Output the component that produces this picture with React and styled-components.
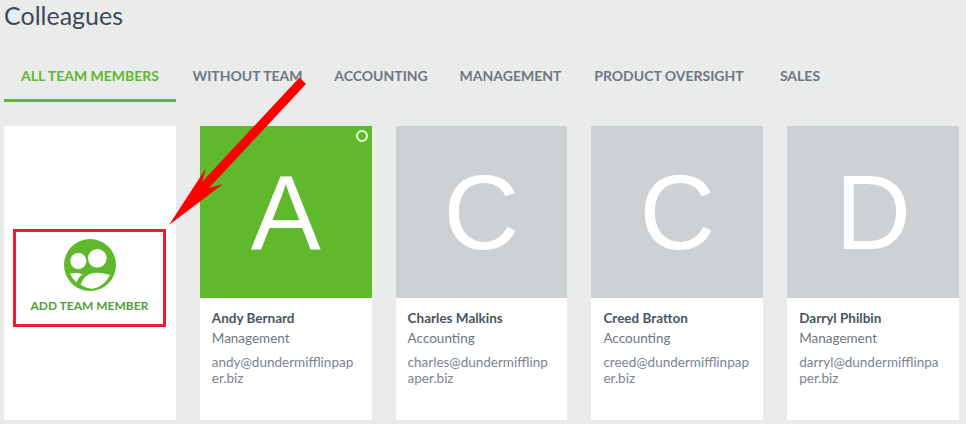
import React from "react";
import styled, { createGlobalStyle } from "styled-components";

const FONT = `"Lato", "Open Sans", "Liberation Sans", sans-serif`;

const GlobalStyle = createGlobalStyle`
  html, body {
    margin: 0;
    padding: 0;
    background: #eaecec;
    overflow: hidden;
  }
`;

const tabs = [
  { label: "All team members", width: 172 },
  { label: "Without team", width: 143 },
  { label: "Accounting", width: 124 },
  { label: "Management", width: 135 },
  { label: "Product oversight", width: 182 },
  { label: "Sales", width: 80 },
];

const people = [
  { name: "Andy Bernard", team: "Management", mail: ["andy@dundermifflinpap", "er.biz"], active: true },
  { name: "Charles Malkins", team: "Accounting", mail: ["charles@dundermifflinp", "aper.biz"] },
  { name: "Creed Bratton", team: "Accounting", mail: ["creed@dundermifflinpap", "er.biz"] },
  { name: "Darryl Philbin", team: "Management", mail: ["darryl@dundermifflinpa", "per.biz"] },
];

function App() {
  return (
    <Page>
      <GlobalStyle />
      <Title>Colleagues</Title>
      <TabBar>
        {tabs.map((tab, i) => (
          <Tab key={tab.label} $width={tab.width} $active={i === 0}>
            {tab.label}
          </Tab>
        ))}
      </TabBar>
      <Cards>
        <AddCard>
          <AddBox>
            <AddIcon width="52" height="52" viewBox="0 0 52 52">
              <circle cx="26" cy="26" r="26" fill="#60b82c" />
              <circle cx="14.3" cy="22" r="8" fill="#fff" />
              <circle cx="33.3" cy="19.3" r="9.3" fill="#fff" />
              <path d="M6 34.5 C10 33.5 15 33.8 18.7 35.3 C15.5 37.5 13.5 40.5 12.7 43.5 C10 41 7.5 38 6 34.5 Z" fill="#fff" />
              <path d="M16.7 45.5 C19 38 25 33.7 32.7 33.7 C37.5 33.7 42.5 34.7 46 36 C42 44 35 49 28 49.8 C24 49.5 20 48 16.7 45.5 Z" fill="#fff" />
            </AddIcon>
            <AddLabel>Add team member</AddLabel>
          </AddBox>
        </AddCard>
        {people.map((p) => (
          <Card key={p.name}>
            <Avatar $active={p.active}>
              {p.name[0]}
              {p.active && <Status />}
            </Avatar>
            <Info>
              <Name>{p.name}</Name>
              <Team>{p.team}</Team>
              <Mail>
                {p.mail[0]}
                <br />
                {p.mail[1]}
              </Mail>
            </Info>
          </Card>
        ))}
      </Cards>
      <Arrow width="160" height="170" viewBox="160 70 160 170">
        <path d="M299.5 77.5 L306 84 L209 188 L223 184 L169 225 L206 168 L202 182 Z" fill="#ff0000" />
      </Arrow>
    </Page>
  );
}

export default App;

const Page = styled.div`
  position: relative;
  width: 966px;
  height: 424px;
  padding: 0 7px 0 4px;
  box-sizing: border-box;
  overflow: hidden;
  font-family: ${FONT};
`;

const Title = styled.h1`
  margin: 0;
  height: 51px;
  font-size: 25px;
  line-height: 31px;
  font-weight: 400;
  color: #3f4a56;
`;

const TabBar = styled.div`
  display: flex;
  height: 51px;
`;

const Tab = styled.div`
  box-sizing: border-box;
  width: ${({ $width }) => $width}px;
  height: 51px;
  padding-top: 15px;
  text-align: center;
  font-size: 14px;
  line-height: 20px;
  font-weight: 700;
  text-transform: uppercase;
  white-space: nowrap;
  color: ${({ $active }) => ($active ? "#60b82c" : "#6f7780")};
  border-bottom: 3px solid ${({ $active }) => ($active ? "#60b82c" : "transparent")};
`;

const Cards = styled.div`
  display: grid;
  grid-template-columns: repeat(5, minmax(0, 1fr));
  column-gap: 24px;
  height: 294px;
  margin-top: 24px;
`;

const AddCard = styled.div`
  background: #fff;
  padding: 103px 10px 0 9px;
`;

const AddBox = styled.div`
  box-sizing: border-box;
  height: 98px;
  border: 3px solid #ed1c2e;
  display: flex;
  flex-direction: column;
  align-items: center;
  padding-top: 7px;
`;

const AddIcon = styled.svg`
  margin-left: 1px;
`;

const AddLabel = styled.div`
  margin-top: 7px;
  font-size: 12px;
  line-height: 16px;
  font-weight: 700;
  text-transform: uppercase;
  white-space: nowrap;
  color: #4f9f3a;
`;

const Card = styled.div`
  background: #fff;
`;

const Avatar = styled.div`
  position: relative;
  box-sizing: border-box;
  height: 172px;
  padding-top: 2px;
  display: flex;
  align-items: center;
  justify-content: center;
  font-family: "Liberation Sans", Arial, sans-serif;
  font-size: 105px;
  color: #fff;
  background: ${({ $active }) => ($active ? "#60b82c" : "#cdd1d4")};
`;

const Status = styled.span`
  position: absolute;
  top: 4px;
  right: 4px;
  width: 12px;
  height: 12px;
  box-sizing: border-box;
  border: 2px solid #eaf4e2;
  border-radius: 50%;
`;

const Info = styled.div`
  padding: 11px 12px 0;
`;

const Name = styled.div`
  font-size: 13.5px;
  line-height: 18px;
  font-weight: 700;
  color: #4a5560;
`;

const Team = styled.div`
  margin-top: 2px;
  font-size: 13.5px;
  line-height: 18px;
  color: #6f7780;
`;

const Mail = styled.div`
  margin-top: 7px;
  font-size: 13.5px;
  line-height: 16px;
  color: #7c848c;
  white-space: nowrap;
`;

const Arrow = styled.svg`
  position: absolute;
  left: 160px;
  top: 70px;
`;
